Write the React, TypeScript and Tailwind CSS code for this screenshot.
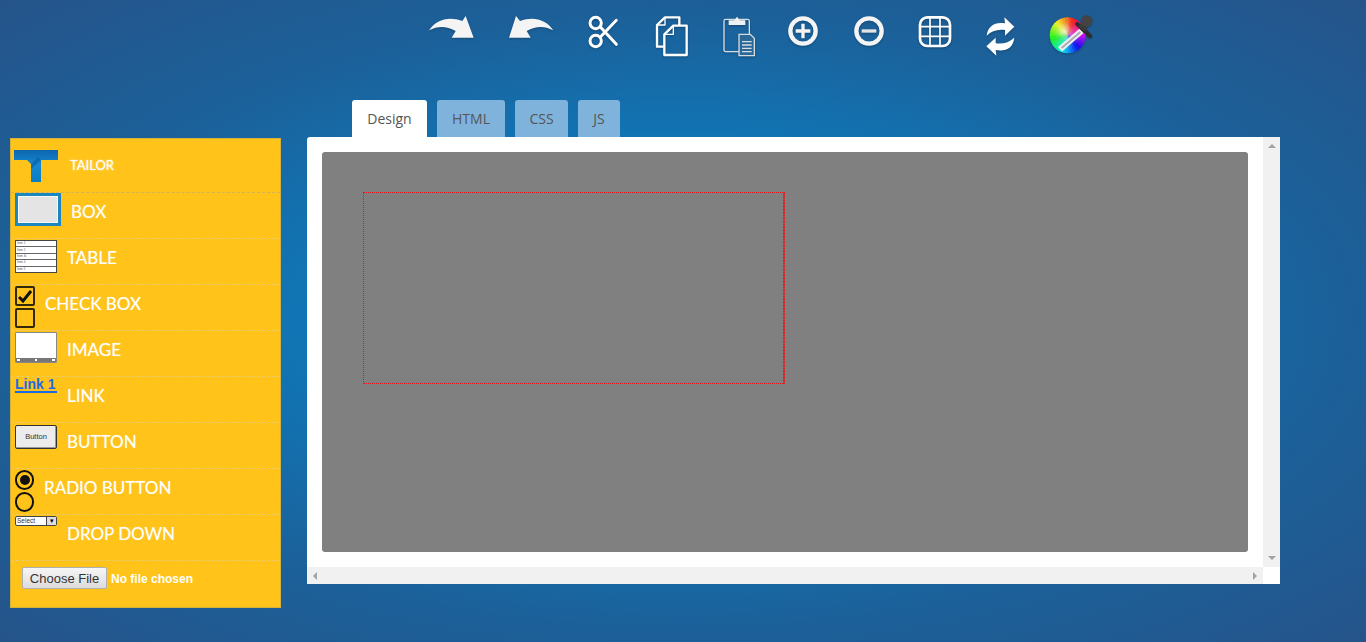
const SECTORS = Array.from({ length: 36 }, (_, i) => i * 10);

// Toolbar icons share one 42px tall box, so they line up along the top
function ToolIcon({ x, w, children }: { x: number; w: number; children: React.ReactNode }) {
  return (
    <svg
      width={w}
      height={42}
      viewBox={`${x} 30 ${w * 3} 126`}
      className="shrink-0 overflow-visible drop-shadow-[0_1px_1px_rgba(0,0,0,0.25)]"
    >
      {children}
    </svg>
  );
}

function Toolbar() {
  return (
    <div className="flex h-[100px] gap-[35px] pl-[429px] pt-[15px]">
      <ToolIcon x={28} w={45}>
        <path d="M28 76C50 45 85 33 128 48L138 33L162 98L96 98L108 78C80 62 55 62 28 76Z" fill="#f4f4f4" />
      </ToolIcon>
      <ToolIcon x={267} w={44}>
        <path d="M400 76C378 45 343 33 300 48L288 33L267 98L332 98L320 78C348 62 373 62 400 76Z" fill="#f4f4f4" />
      </ToolIcon>
      <ToolIcon x={505} w={33}>
        <g fill="none" stroke="#fff" strokeWidth="9" strokeLinecap="round">
          <circle cx="528" cy="54" r="17" />
          <circle cx="528" cy="108" r="17" />
          <path d="M542 66L590 118M542 96L590 46" />
        </g>
      </ToolIcon>
      <ToolIcon x={708} w={32}>
        <g fill="none" stroke="#fff" strokeWidth="7" strokeLinejoin="round">
          <path d="M733 125L711 125L711 60L735 37L778 37L778 62" />
          <path d="M735 37L735 60L711 60" strokeWidth="4" />
          <path d="M760 62L800 62L800 150L733 150L733 88Z" />
          <path d="M760 64L760 88L735 88" strokeWidth="4" />
        </g>
      </ToolIcon>
      <ToolIcon x={908} w={30}>
        <rect x="911" y="43" width="76" height="97" rx="5" fill="none" stroke="#d5dde4" strokeWidth="4" />
        <path d="M925 46L942 46L950 35L958 46L975 46L975 60L925 60Z" fill="#eef1f3" />
        <path d="M956 88L990 88L1002 100L1002 152L956 152Z" fill="#2a6898" stroke="#d5dde4" strokeWidth="4" />
        <path d="M965 110L994 110M965 120L994 120M965 130L994 130M965 140L994 140" stroke="#d5dde4" strokeWidth="4" />
      </ToolIcon>
      <ToolIcon x={85} w={31}>
        <circle cx="130" cy="78" r="38" fill="none" stroke="#f4f4f4" strokeWidth="13" />
        <path d="M108 78L152 78M130 56L130 100" stroke="#f4f4f4" strokeWidth="10" />
      </ToolIcon>
      <ToolIcon x={281} w={30}>
        <circle cx="326" cy="78" r="38" fill="none" stroke="#f4f4f4" strokeWidth="13" />
        <path d="M304 78L348 78" stroke="#e4e4e4" strokeWidth="10" />
      </ToolIcon>
      <ToolIcon x={477} w={32}>
        <g fill="none" stroke="#fff">
          <rect x="480" y="37" width="90" height="86" rx="22" strokeWidth="8" />
          <path d="M510 38L510 122M540 38L540 122M481 65L569 65M481 94L569 94" strokeWidth="5" />
        </g>
      </ToolIcon>
      <ToolIcon x={678} w={28}>
        <path d="M680 92C684 62 705 50 735 55L733 37L763 65L735 92L735 75C712 72 695 78 680 92Z" fill="#fff" />
        <path d="M763 98C759 130 738 140 707 135L709 152L679 124L707 98L707 115C730 118 747 112 763 98Z" fill="#fff" />
      </ToolIcon>
      <ToolIcon x={868} w={44}>
        <defs>
          <radialGradient id="wheelGlow" cx="0.42" cy="0.4" r="0.5">
            <stop offset="0" stopColor="#fff" stopOpacity="0.7" />
            <stop offset="0.5" stopColor="#fff" stopOpacity="0.15" />
            <stop offset="1" stopColor="#fff" stopOpacity="0" />
          </radialGradient>
        </defs>
        {SECTORS.map((deg) => {
          const a = ((deg - 90) * Math.PI) / 180;
          const b = ((deg - 78) * Math.PI) / 180;
          return (
            <path
              key={deg}
              d={`M924 91L${924 + 54 * Math.cos(a)} ${91 + 54 * Math.sin(a)}L${924 + 54 * Math.cos(b)} ${91 + 54 * Math.sin(b)}Z`}
              fill={`hsl(${15 - deg} 88% 50%)`}
            />
          );
        })}
        <circle cx="924" cy="91" r="54" fill="url(#wheelGlow)" />
        <path d="M901 133L966 77" stroke="#f0f0f0" strokeWidth="18" />
        <path d="M906 129L962 81" stroke="#a9adb0" strokeWidth="6" />
        <path d="M953 57L991 93" stroke="#2e2e2e" strokeWidth="13" strokeLinecap="round" />
        <path d="M981 50L966 72" stroke="#3a3a3a" strokeWidth="24" />
        <circle cx="981" cy="48" r="17" fill="#444" />
      </ToolIcon>
    </div>
  );
}

function TailorLogo() {
  return (
    <svg width="44" height="34" viewBox="0 0 44 34" className="shrink-0">
      <defs>
        <linearGradient id="tailor" x1="0" y1="0" x2="0" y2="1">
          <stop offset="0" stopColor="#0c66ad" />
          <stop offset="0.45" stopColor="#1588d2" />
          <stop offset="1" stopColor="#0b7dc4" />
        </linearGradient>
      </defs>
      <path d="M0 1L44 1L44 11L27 11L27 33L17 33L17 15L13 11L0 11Z" fill="url(#tailor)" />
      <path d="M27 11L17 20L17 15L24 8Z" fill="#0a5d9c" opacity="0.6" />
    </svg>
  );
}

function BoxIcon() {
  return (
    <div className="h-[33px] w-[46px] shrink-0 border-[3px] border-[#1c86c0] bg-[#e4e4e4] shadow-[inset_0_0_0_1px_#f8f8f8]" />
  );
}

function TableIcon() {
  return (
    <div className="mt-px flex h-[33px] w-[42px] shrink-0 flex-col border border-[#444] bg-[#666]">
      {["Item 1", "Item 2", "Item 3c", "Item 4", "Item 5"].map((item) => (
        <div
          key={item}
          className="mb-px flex h-[5.6px] items-center bg-white pl-px font-['Liberation_Sans',sans-serif] text-[3px] leading-none text-[#555] last:mb-0"
        >
          {item}
        </div>
      ))}
    </div>
  );
}

function CheckIcon() {
  return (
    <div className="flex w-[20px] shrink-0 flex-col gap-[2px] pt-px">
      <div className="flex h-[20px] w-[20px] items-center justify-center rounded-[2px] border-2 border-[#33290a]">
        <svg width="14" height="14" viewBox="0 0 14 14">
          <path d="M1 8L5 12L13 2" fill="none" stroke="#111" strokeWidth="3" />
        </svg>
      </div>
      <div className="h-[20px] w-[20px] rounded-[2px] border-2 border-[#33290a]" />
    </div>
  );
}

function ImageIcon() {
  return (
    <div className="mt-px flex h-[31px] w-[42px] shrink-0 flex-col rounded-[1px] border border-[#888] bg-white">
      <div className="flex-1" />
      <div className="flex h-[4px] items-center justify-between bg-[#777] px-px">
        <span className="h-[2px] w-[3px] bg-white" />
        <span className="h-[2px] w-[2px] bg-white" />
        <span className="h-[2px] w-[3px] bg-white" />
      </div>
    </div>
  );
}

function LinkIcon() {
  return (
    <div className="w-[42px] shrink-0 whitespace-nowrap border-b-2 border-[#1a6ae8] font-['Liberation_Sans',sans-serif] text-[14px] leading-[14px] font-bold text-[#1a6ae8]">
      Link 1
    </div>
  );
}

function ButtonIcon() {
  return (
    <div className="mt-[2px] flex h-[24px] w-[42px] shrink-0 items-center justify-center rounded-[2px] border border-[#333] bg-[#ececec] font-['Liberation_Sans',sans-serif] text-[7.5px] text-[#333] shadow-[inset_-1px_-1px_0_#999]">
      Button
    </div>
  );
}

function RadioIcon() {
  return (
    <div className="flex w-[19px] shrink-0 flex-col gap-[2px] pt-px">
      <div className="flex h-[20px] w-[19px] items-center justify-center rounded-full border-2 border-[#111]">
        <div className="h-[10px] w-[10px] rounded-full bg-[#111]" />
      </div>
      <div className="h-[20px] w-[19px] rounded-full border-2 border-[#111]" />
    </div>
  );
}

function DropdownIcon() {
  return (
    <div className="mt-px flex h-[10px] w-[42px] shrink-0 rounded-[2px] border border-[#444] bg-white font-['Liberation_Sans',sans-serif] text-[6.5px] leading-[8px] text-[#333]">
      <span className="flex-1 pl-px">Select</span>
      <span className="w-[10px] border-l border-[#444] bg-[#ddd] text-center text-[7px] text-black">▾</span>
    </div>
  );
}

const WIDGETS = [
  { label: "BOX", icon: <BoxIcon /> },
  { label: "TABLE", icon: <TableIcon /> },
  { label: "CHECK BOX", icon: <CheckIcon /> },
  { label: "IMAGE", icon: <ImageIcon /> },
  { label: "LINK", icon: <LinkIcon /> },
  { label: "BUTTON", icon: <ButtonIcon /> },
  { label: "RADIO BUTTON", icon: <RadioIcon /> },
  { label: "DROP DOWN", icon: <DropdownIcon /> },
];

function Sidebar() {
  return (
    <div className="mt-[38px] ml-[10px] h-[470px] w-[271px] shrink-0 border border-[#d4b23a] bg-[#ffc31a] font-['Lato',sans-serif] text-white">
      <div className="flex h-[54px] items-center gap-[12px] border-b border-dashed border-[#cfb45c] pl-[3px]">
        <TailorLogo />
        <span className="text-[13px] font-normal [text-shadow:0_0_2px_rgba(255,255,255,0.8)]">TAILOR</span>
      </div>
      {WIDGETS.map((widget) => (
        <div
          key={widget.label}
          className="flex h-[46px] items-start gap-[10px] border-b border-dashed border-[#e6cb70] pl-[4px]"
        >
          {widget.icon}
          <span className="mt-[7px] text-[17px] leading-[24px] whitespace-nowrap [text-shadow:0_0_1px_rgba(255,255,255,0.5)]">
            {widget.label}
          </span>
        </div>
      ))}
      <div className="pt-[4px] pl-[11px]">
        <input
          type="file"
          className="font-['Liberation_Sans',sans-serif] text-[12px] leading-[21px] font-bold text-white file:mr-[4px] file:h-[22px] file:w-[85px] file:rounded-[2px] file:border file:border-[#b0b0b0] file:bg-linear-to-b file:from-[#f6f6f6] file:to-[#dcdcdc] file:text-[13px] file:font-normal file:text-[#333]"
        />
      </div>
    </div>
  );
}

const TABS = [
  { label: "Design", width: "w-[75px]", active: true },
  { label: "HTML", width: "w-[68px]", active: false },
  { label: "CSS", width: "w-[53px]", active: false },
  { label: "JS", width: "w-[42px]", active: false },
];

function Arrow({ points }: { points: string }) {
  return (
    <svg width="8" height="8" viewBox="0 0 8 8">
      <polygon points={points} fill="#a3a3a3" />
    </svg>
  );
}

function Editor() {
  return (
    <div className="ml-[26px] w-[973px]">
      <div className="flex h-[37px] gap-[10px] pl-[45px] font-['Open_Sans',sans-serif] text-[14px] text-[#555]">
        {TABS.map((tab) => (
          <div
            key={tab.label}
            className={`flex items-center justify-center rounded-t-[3px] ${tab.width} ${tab.active ? "bg-white" : "bg-[#7fb3dc]"}`}
          >
            {tab.label}
          </div>
        ))}
      </div>
      <div className="h-[447px] overflow-hidden rounded-tl-[3px] bg-white">
        <div className="flex h-[430px]">
          <div className="flex-1 p-[15px]">
            <div className="h-[400px] overflow-hidden rounded-[3px] bg-[#808080] pt-[40px] pl-[41px]">
              <div className="h-[192px] w-[422px] border border-r-0 border-dotted border-[#e8141c] bg-[linear-gradient(#f01010_66%,transparent_66%)] bg-[length:2px_3px] bg-right bg-repeat-y" />
            </div>
          </div>
          <div className="flex w-[17px] flex-col items-center justify-between bg-[#f1f1f1] py-[5px]">
            <Arrow points="0,6 4,2 8,6" />
            <Arrow points="0,2 8,2 4,6" />
          </div>
        </div>
        <div className="flex h-[17px]">
          <div className="flex flex-1 items-center justify-between bg-[#f1f1f1] px-[4px]">
            <Arrow points="6,0 6,8 2,4" />
            <Arrow points="2,0 6,4 2,8" />
          </div>
          <div className="w-[17px] bg-white" />
        </div>
      </div>
    </div>
  );
}

export default function App() {
  return (
    <div className="h-[642px] w-[1366px] overflow-hidden bg-[radial-gradient(ellipse_at_center,#0a84c8_0%,#1076b6_38%,#1c6099_68%,#25548a_100%)]">
      <Toolbar />
      <div className="flex items-start">
        <Sidebar />
        <Editor />
      </div>
    </div>
  );
}
